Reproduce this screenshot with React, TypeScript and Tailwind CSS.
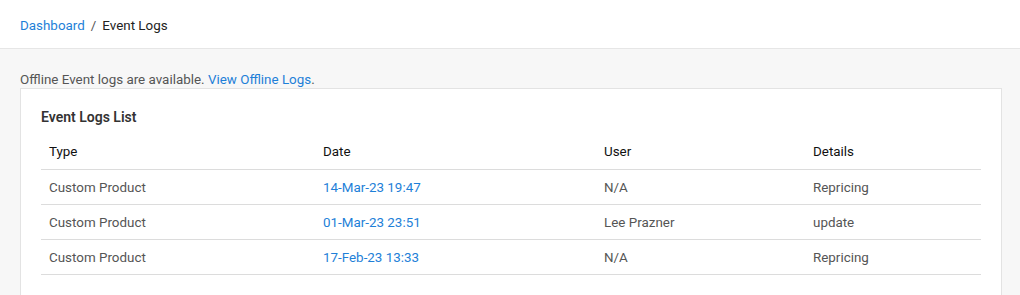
import React from "react";

const rows = [
  { type: "Custom Product", date: "14-Mar-23 19:47", user: "N/A", details: "Repricing" },
  { type: "Custom Product", date: "01-Mar-23 23:51", user: "Lee Prazner", details: "update" },
  { type: "Custom Product", date: "17-Feb-23 13:33", user: "N/A", details: "Repricing" },
];

export default function App() {
  return (
    <div className="w-[1020px] h-[295px] overflow-hidden bg-[#f7f7f7] text-[13.4px] text-[#555]" style={{ fontFamily: "Roboto, 'Noto Sans', sans-serif" }}>
      <div className="h-[49px] bg-white border-b border-[#e6e6e6] flex items-center px-5 pt-[4px]">
        <a className="text-[#1e7fd8]">Dashboard</a>
        <span className="mx-[6px] text-[#555]">/</span>
        <span className="text-[#222]">Event Logs</span>
      </div>
      <div className="px-5 pt-[20px]">
        <div className="leading-[19px] pt-[1px] h-[19px]">
          Offline Event logs are available. <a className="text-[#1e7fd8]">View Offline Logs</a>.
        </div>
        <div className="w-[982px] bg-white border border-[#e3e3e3] px-5 pt-[19px] pb-6">
          <div className="text-[14px] font-semibold text-[#333] leading-[18px]">Event Logs List</div>
          <table className="w-full mt-[9px] border-collapse">
            <thead>
              <tr className="border-b border-[#dcdcdc]">
                <th className="text-left font-normal text-[#111] px-2 h-[34px] pt-[1px] w-[274px]">Type</th>
                <th className="text-left font-normal text-[#111] px-2 pt-[1px] w-[281px]">Date</th>
                <th className="text-left font-normal text-[#111] px-2 pt-[1px] w-[209px]">User</th>
                <th className="text-left font-normal text-[#111] px-2 pt-[1px]">Details</th>
              </tr>
            </thead>
            <tbody>
              {rows.map((r, i) => (
                <tr key={i} className="border-b border-[#dcdcdc]">
                  <td className="px-2 h-[35px] pt-[3px]">{r.type}</td>
                  <td className="px-2 pt-[3px] text-[#1e7fd8]">{r.date}</td>
                  <td className="px-2 pt-[3px]">{r.user}</td>
                  <td className="px-2 pt-[3px]">{r.details}</td>
                </tr>
              ))}
            </tbody>
          </table>
        </div>
      </div>
    </div>
  );
}
